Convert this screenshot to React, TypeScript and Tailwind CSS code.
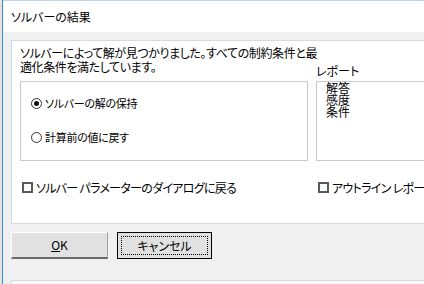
import React from "react";

const font = {
  fontFamily: '"Noto Sans CJK JP", "Noto Sans", sans-serif',
};

function Radio({ checked, label }: { checked?: boolean; label: string }) {
  return (
    <div className="flex items-center h-[14px] gap-[3px]">
      <div className="w-[11px] h-[11px] rounded-full border border-[#333333] bg-white flex items-center justify-center">
        {checked && <div className="w-[5px] h-[5px] rounded-full bg-[#111111]" />}
      </div>
      <span className="text-[11px] leading-[14px] tracking-[-0.3px] text-black whitespace-nowrap">{label}</span>
    </div>
  );
}

function Check({ label }: { label: string }) {
  return (
    <div className="flex items-center h-[11px] gap-[3px]">
      <div className="w-[11px] h-[11px] border-2 border-[#5a5a5a] bg-white shrink-0" />
      <span className="text-[12px] leading-[14px] tracking-[-0.7px] text-black whitespace-nowrap">{label}</span>
    </div>
  );
}

export default function App() {
  return (
    <div
      className="w-[424px] h-[284px] overflow-hidden flex bg-[#f0f0f0] [font-feature-settings:'palt']"
      style={font}
    >
      <div className="w-[2px] h-full bg-[#e4e4e4]" />
      <div className="w-[1px] h-full bg-[#3b8ad8]" />
      <div className="flex-1 flex flex-col min-w-0">
        <div className="h-[32px] bg-white border-t border-[#bcd3ea] flex items-center pl-[8px]">
          <span className="text-[12px] text-black whitespace-nowrap">ソルバーの結果</span>
        </div>
        <div className="flex-1 flex flex-col pl-[8px] pt-[8px]">
          <div className="h-[184px] bg-white border border-r-0 border-[#d3dae0] flex">
            <div className="ml-[8px] pt-[5px] w-[288px] flex flex-col shrink-0">
              <p className="text-[12px] leading-[14px] tracking-[-0.4px] text-black whitespace-nowrap">
                ソルバーによって解が見つかりました。すべての制約条件と最
                <br />
                適化条件を満たしています。
              </p>
              <div className="mt-[7px] h-[80px] border border-[#cacaca] flex flex-col pl-[10px] pt-[14px] gap-[20px]">
                <Radio checked label="ソルバーの解の保持" />
                <Radio label="計算前の値に戻す" />
              </div>
              <div className="mt-[21px] pl-[2px]">
                <Check label="ソルバー パラメーターのダイアログに戻る" />
              </div>
            </div>
            <div className="ml-[8px] pt-[23px] flex-1 flex flex-col">
              <div className="text-[12px] leading-[14px] text-black whitespace-nowrap">レポート</div>
              <div className="mt-[3px] h-[80px] border border-r-0 border-[#cacaca] pl-[9px] pt-0 flex flex-col">
                <span className="text-[12px] leading-[12px] text-black">解答</span>
                <span className="text-[12px] leading-[12px] text-black">感度</span>
                <span className="text-[12px] leading-[12px] text-black">条件</span>
              </div>
              <div className="mt-[21px] pl-[2px]">
                <Check label="アウトライン レポート" />
              </div>
            </div>
          </div>
          <div className="flex gap-[9px] mt-[8px]">
            <button className="w-[97px] h-[27px] bg-[#e1e1e1] border-t border-l border-t-[#fdfdfd] border-l-[#fdfdfd] border-r border-r-[#a0a0a0] border-b-2 border-b-[#6a6a6a] text-[12px] text-black flex items-center justify-center">
              <span>
                <span className="underline">O</span>K
              </span>
            </button>
            <button className="w-[95px] h-[27px] bg-[#e1e1e1] border border-black p-[3px] flex">
              <div className="flex-1 border border-dotted border-black flex items-center justify-center text-[12px] text-black whitespace-nowrap">
                キャンセル
              </div>
            </button>
          </div>
          <div className="mt-[21px] flex-1 bg-[#fafafa] border-t border-l border-[#d3dae0]" />
        </div>
      </div>
    </div>
  );
}
